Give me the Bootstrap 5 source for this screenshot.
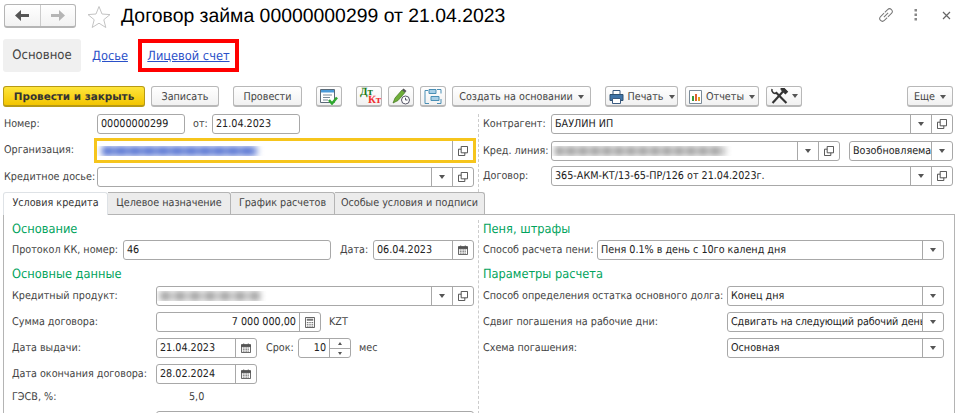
<!doctype html>
<html lang="ru"><head><meta charset="utf-8"><title>Договор займа</title>
<link href="https://cdn.jsdelivr.net/npm/bootstrap@5.3.0/dist/css/bootstrap.min.css" rel="stylesheet">
<style>
html,body{height:413px;overflow:hidden}
*{text-rendering:geometricPrecision}
body{background:#fff;color:#444;font:10.7px/1.2 "DejaVu Sans",sans-serif;font-stretch:condensed}
.hdr{height:39px;padding:4px 0 0 4px}
.navgrp{width:72px;height:24px;border:1px solid #b5b5b5;border-bottom-width:2px;border-radius:3px;background:linear-gradient(#fff,#f2f2f2)}
.navgrp>span{width:36px}
.navgrp>span+span{border-left:1px solid #ccc}
.titl{font:19.4px/1 "Liberation Sans",sans-serif;color:#000;margin-left:10px;white-space:nowrap;padding-top:3px}
.star{margin:1px 0 0 11px}
.topi{margin:3px 9px 0 auto}
.sect{height:33px;margin-left:3px;margin-bottom:14px}
.sect-a{width:78px;background:#f0f0f0;border-radius:3px;font-size:13px;color:#444}
.sect-l{color:#2a50c8;text-decoration:underline;font-size:12.7px}
.sect-box{border:4px solid #f00;width:101px;margin-left:10px}
.tb{height:21px;margin-left:3px}
.bt{height:21px;border:1px solid #b8b8b8;border-bottom-width:2px;border-radius:3px;background:linear-gradient(#fff,#f1f1f1);color:#444;padding:2px 0 0;white-space:nowrap;font-size:10.7px;font-stretch:condensed;display:flex;align-items:center;justify-content:center;flex:none}
.bt-i{padding:0}
.bt-y{background:linear-gradient(#fee53c,#f3c500);border-color:#b79a14;color:#333;font-weight:700;width:142px;font-size:10.4px;font-stretch:normal}
.w68{width:68px}.w69{width:69px}.w26{width:26px}.w139{width:139px}.w73{width:73px}.w74{width:74px}.w36{width:36px}.w46{width:46px}
.tri{display:inline-block;border:3px solid transparent;border-top:4px solid #555;border-bottom:0;margin-left:5px;flex:none}
.dtkt{font:700 11px/8.500px "Liberation Serif",serif;text-align:left;padding-left:3px;display:block;width:100%}
.dtkt b{color:#1b7a1b;display:block}.dtkt i{color:#f03030;font-style:normal;display:block;padding-left:8px}
.frmtop{margin-top:7px;height:78px}
.colL{width:474px;margin-left:4px;flex:none}
.colR{width:474px;border-left:1px dashed #ccc;padding-left:4px;flex:none}
.r{height:20px;white-space:nowrap}
.fld{height:20px;border:1px solid #a8a8a8;border-radius:3px;background:#fff;color:#222;overflow:hidden;white-space:nowrap;flex:none}
.fv{padding-left:3px;flex:1 1 auto;overflow:hidden;min-width:0}
.tight{letter-spacing:-.1px}
.fc{width:21px;flex:none;border-left:1px solid #a8a8a8;height:100%}
.tc{display:inline-block;border:3px solid transparent;border-top:4px solid #555;border-bottom:0}
.lb{flex:none}
.w88{width:88px}.l93{width:93px}
.fx{width:377px}
.org{width:382px;height:25px;margin:0 0 0 -3px;border:3px solid #f6c51c;background:#fff;flex:none}
.org .fv{padding-left:5px}
.blur{height:10px;display:block}
.bl-b{width:155px;filter:blur(3px);background:repeating-linear-gradient(90deg,#5573d2 0 10px,#7f96de 10px 14px)}
.bl-g{width:170px;filter:blur(3px);background:repeating-linear-gradient(90deg,#999 0 8px,#d4d4d4 8px 12px)}
.bl-g2{width:100px;filter:blur(3px);background:repeating-linear-gradient(90deg,#a0a0a0 0 10px,#dcdcdc 10px 15px)}
.l68{width:68px}.f402{width:402px}.f289{width:289px}.f104{width:104px}
.tabsx{border:0;margin:0 0 0 3px;height:22px;font-size:10.7px;flex-wrap:nowrap}
.tabsx .nav-link{height:22px;padding:4px 0 0;text-align:center;border:1px solid #b4b4b4;border-left-width:0;border-bottom:0;border-radius:0 3px 0 0;background:#ececec;color:#444;margin:0;white-space:nowrap}
.tabsx .nav-link.active{background:#fff;border-left-width:1px;height:23px;position:relative;z-index:1;border-radius:3px 3px 0 0;color:#333}
.pnl{margin:0 5px 0 3px;border:1px solid #b4b4b4;border-bottom:0;height:199px;padding-top:5px;overflow:hidden}
.pL{width:474px;padding-left:8px;flex:none}
.pR{border-left:1px dashed #ccc;padding-left:4px;flex:1 1 auto;height:194px}
.hd{height:18px;color:#00a35c;font-size:12.7px;line-height:18px;margin-bottom:2px}
.hd2{margin-top:5px;margin-bottom:3px}
.g6{margin-top:6px}
.l111{width:111px}.l144{width:144px}.l114{width:114px}.l244{width:244px}
.f208{width:208px}.f101{width:101px}.f318{width:318px}.f165{width:165px}.f53{width:53px}.f347{width:347px}.f217{width:217px}
.spn{width:21px;border-left:1px solid #a8a8a8;height:100%;flex:none;display:flex;flex-direction:column;align-items:center;justify-content:space-around;padding:1px 0}
.spn i{display:block;border:2px solid transparent}
.spn .up{border-bottom:3px solid #555;border-top:0}
.spn .dn{border-top:3px solid #555;border-bottom:0}
.spn hr{width:100%;margin:0;opacity:1;border-top:1px solid #a8a8a8}
.num{text-align:right;padding-right:3px}
.gs{margin-top:3px}
.fc{display:flex;align-items:center;justify-content:center}
.sprite{position:absolute}
</style></head><body>
<svg width="0" height="0" class="sprite">
<symbol id="cp" viewBox="0 0 11 11"><path d="M3.500.5h7v7h-7zM3.500 3.500h-3v7h7v-3" fill="none" stroke="#444"/></symbol>
<symbol id="cal" viewBox="0 0 11 11"><path d="M.5 2h10v8.500h-10z" fill="#fff" stroke="#555"/><path d="M.5 2h10v2h-10zM3 .5v2M8 .5v2" fill="#555" stroke="#555"/><path d="M2 5.500h7M2 7.300h7M2 9h7" stroke="#666" stroke-dasharray="1.200 .6"/></symbol>
<symbol id="clc" viewBox="0 0 11 12"><path d="M.5.5h10v11h-10z" fill="#fff" stroke="#555"/><path d="M2 2h7v2h-7z" fill="#777"/><path d="M2 6h7M2 8h7M2 10h7" stroke="#666" stroke-dasharray="1.300 .6"/></symbol>
</svg>

<div class="hdr d-flex align-items-start">
 <div class="navgrp d-flex">
  <span class="d-flex align-items-center justify-content-center"><svg width="15" height="11" viewBox="0 0 15 11"><path d="M6 0v4h8v3H6v4L0 5.500z" fill="#555"/></svg></span>
  <span class="d-flex align-items-center justify-content-center"><svg width="15" height="11" viewBox="0 0 15 11"><path d="M9 0v4H1v3h8v4l6-5.500z" fill="#b5b5b5"/></svg></span>
 </div>
 <svg class="star" width="24" height="24" viewBox="0 0 24 24"><path d="M12 1.500l3 7.500 8 .6-6.200 5.100 2 7.800L12 18.200l-6.800 4.300 2-7.800L1 9.600 9 9z" fill="#fff" stroke="#c4c4c4"/></svg>
 <div class="titl">Договор займа 00000000299 от 21.04.2023</div>
 <div class="topi d-flex align-items-center">
  <svg width="16" height="16" viewBox="0 0 16 16" fill="none" stroke="#777"><g transform="rotate(-45 8 8)"><path d="M8 5.300H3a2.700 2.700 0 0 0 0 5.400h4"/><path d="M8 10.700h5a2.700 2.700 0 0 0 0-5.400H9"/><path d="M5 8h6"/></g></svg>
  <svg style="margin-left:20px" width="4" height="12" viewBox="0 0 4 12" fill="#888"><rect x=".5" y="0" width="2.500" height="2.500"/><rect x=".5" y="4.500" width="2.500" height="2.500"/><rect x=".5" y="9" width="2.500" height="2.500"/></svg>
  <svg style="margin-left:24px" width="9" height="9" viewBox="0 0 9 9" stroke="#666" stroke-width="1.200"><path d="M1 1l7 7M8 1L1 8"/></svg>
 </div>
</div>

<div class="sect d-flex">
 <div class="sect-a d-flex align-items-center justify-content-center">Основное</div>
 <div class="sect-l d-flex align-items-center" style="margin-left:11px">Досье</div>
 <div class="sect-box sect-l d-flex align-items-center justify-content-center">Лицевой счет</div>
</div>

<div class="tb d-flex">
 <button class="bt bt-y">Провести и закрыть</button>
 <button class="bt w68" style="margin-left:6px">Записать</button>
 <button class="bt w69" style="margin-left:14px">Провести</button>
 <button class="bt bt-i w26" style="margin-left:14px"><svg width="20" height="17" viewBox="0 0 20 17"><path d="M1.500 1.500h14v13h-14z" fill="#fff" stroke="#5a6a78"/><path d="M2 2h13v2.500H2z" fill="#4a9ad8"/><path d="M4 7h9M4 9.500h7M4 12h5" stroke="#7a8a98"/><path d="M10 12l3 3.500 5-6" fill="none" stroke="#2ea82e" stroke-width="2.500"/></svg></button>
 <button class="bt bt-i w26" style="margin-left:14px"><span class="dtkt"><b>Дт</b><i>Кт</i></span></button>
 <button class="bt bt-i w26" style="margin-left:6px"><svg width="20" height="17" viewBox="0 0 20 17"><path d="M2 15l2-5 7-8 3 2.500-7 8z" fill="#6fae3a" stroke="#40751c" stroke-width=".7"/><path d="M11 2l1.500-1.500 3 2.500L14 4.500z" fill="#555"/><circle cx="14.500" cy="12" r="4" fill="#fff" stroke="#556"/><path d="M14.500 9.800V12h2" stroke="#556" fill="none"/></svg></button>
 <button class="bt bt-i w26" style="margin-left:6px"><svg width="20" height="17" viewBox="0 0 20 17" fill="none" stroke="#4a8fb5"><path d="M6 1.500h7v4H6z" fill="#a8cfe6"/><path d="M8 8.500h8v4H8z" fill="#a8cfe6"/><path d="M5 2.500H2v13h4M14 1.500h4v4M18 11v4.500h-4"/></svg></button>
 <button class="bt w139" style="margin-left:6px">Создать на основании<span class="tri"></span></button>
 <button class="bt w73" style="margin-left:14px"><svg class="me-1" width="15" height="14" viewBox="0 0 15 14"><path d="M4 .5h7v4H4z" fill="#fff" stroke="#3a5a80"/><path d="M1 4.500h13v6H1z" fill="#3f74a8" stroke="#2e5070"/><path d="M3.500 8.500h8v5h-8z" fill="#fff" stroke="#3a5a80"/></svg>Печать<span class="tri"></span></button>
 <button class="bt w74" style="margin-left:7px"><svg class="me-1" width="13" height="14" viewBox="0 0 13 14"><path d="M.5.500h12v13H.5z" fill="#fff" stroke="#7a8a98"/><path d="M3 6h2v5H3z" fill="#3a9a3a"/><path d="M6 4h2v7H6z" fill="#e06030"/><path d="M9 7h2v4H9z" fill="#e0a020"/></svg>Отчеты<span class="tri"></span></button>
 <button class="bt bt-i w36" style="margin-left:7px"><svg width="19" height="16" viewBox="0 0 17 15" fill="none" stroke="#333" stroke-width="2"><path d="M2 14L12 3"/><path d="M10 .5l3 0 3 3-2 2-4-4z" fill="#333" stroke-width="1"/><path d="M15 14L5 4"/><path d="M6 4.500A3 3 0 0 1 1.500 1"  stroke-width="1.500"/></svg><span class="tri" style="margin-left:3px"></span></button>
 <button class="bt w46 ms-auto" style="margin-right:7px">Еще<span class="tri"></span></button>
</div>

<div class="frmtop d-flex">
 <div class="colL">
  <div class="r d-flex align-items-center"><span class="lb l93">Номер:</span><div class="fld w88 d-flex align-items-center"><span class="fv">00000000299</span></div><span class="lb" style="margin-left:8px;width:19px">от:</span><div class="fld w88 d-flex align-items-center"><span class="fv">21.04.2023</span></div></div>
  <div class="d-flex align-items-center" style="height:33px">
   <span class="lb l93">Организация:</span>
   <div class="org d-flex align-items-center"><span class="fv"><span class="blur bl-b"></span></span><span class="fc"><svg width="10" height="10"><use href="#cp"/></svg></span></div>
  </div>
  <div class="r d-flex align-items-center"><span class="lb l93">Кредитное досье:</span><div class="fld fx d-flex align-items-center"><span class="fv"></span><span class="fc"><i class="tc"></i></span><span class="fc"><svg width="10" height="10"><use href="#cp"/></svg></span></div></div>
 </div>
 <div class="colR">
  <div class="r d-flex align-items-center"><span class="lb l68">Контрагент:</span><div class="fld f402 d-flex align-items-center"><span class="fv">БАУЛИН ИП</span><span class="fc"><i class="tc"></i></span><span class="fc"><svg width="10" height="10"><use href="#cp"/></svg></span></div></div>
  <div class="r d-flex align-items-center" style="margin-top:7px"><span class="lb l68">Кред. линия:</span><div class="fld f289 d-flex align-items-center"><span class="fv"><span class="blur bl-g"></span></span><span class="fc"><i class="tc"></i></span><span class="fc"><svg width="10" height="10"><use href="#cp"/></svg></span></div><div class="fld f104 d-flex align-items-center" style="margin-left:9px"><span class="fv">Возобновляема</span><span class="fc"><i class="tc"></i></span></div></div>
  <div class="r d-flex align-items-center" style="margin-top:5px"><span class="lb l68">Договор:</span><div class="fld f402 d-flex align-items-center"><span class="fv">365-АКМ-КТ/13-65-ПР/126 от 21.04.2023г.</span><span class="fc"><i class="tc"></i></span><span class="fc"><svg width="10" height="10"><use href="#cp"/></svg></span></div></div>
 </div>
</div>

<ul class="nav nav-tabs tabsx">
 <li class="nav-item" style="width:105px"><a class="nav-link active" href="#">Условия кредита</a></li>
 <li class="nav-item" style="width:123px"><a class="nav-link" href="#">Целевое назначение</a></li>
 <li class="nav-item" style="width:104px"><a class="nav-link" href="#">График расчетов</a></li>
 <li class="nav-item" style="width:150px"><a class="nav-link" href="#">Особые условия и подписи</a></li>
</ul>
<div class="pnl d-flex">
 <div class="pL">
  <div class="hd">Основание</div>
  <div class="r d-flex align-items-center"><span class="lb l111">Протокол КК, номер:</span><div class="fld f208 d-flex align-items-center"><span class="fv">46</span></div><span class="lb" style="margin-left:9px;width:33px">Дата:</span><div class="fld f101 d-flex align-items-center"><span class="fv">06.04.2023</span><span class="fc"><svg width="10" height="10"><use href="#cal"/></svg></span></div></div>
  <div class="hd hd2">Основные данные</div>
  <div class="r d-flex align-items-center"><span class="lb l144">Кредитный продукт:</span><div class="fld f318 d-flex align-items-center"><span class="fv"><span class="blur bl-g2"></span></span><span class="fc"><i class="tc"></i></span><span class="fc"><svg width="10" height="10"><use href="#cp"/></svg></span></div></div>
  <div class="r g6 d-flex align-items-center"><span class="lb l144">Сумма договора:</span><div class="fld f165 d-flex align-items-center"><span class="fv num">7 000 000,00</span><span class="fc"><svg width="10" height="11"><use href="#clc"/></svg></span></div><span class="ms-2">KZT</span></div>
  <div class="r g6 d-flex align-items-center"><span class="lb l144">Дата выдачи:</span><div class="fld f101 d-flex align-items-center"><span class="fv">21.04.2023</span><span class="fc"><svg width="10" height="10"><use href="#cal"/></svg></span></div><span class="lb" style="margin-left:9px;width:32px">Срок:</span><div class="fld f53 d-flex align-items-center"><span class="fv num">10</span><span class="spn"><i class="up"></i><hr><i class="dn"></i></span></div><span class="ms-2">мес</span></div>
  <div class="r g6 d-flex align-items-center"><span class="lb l144">Дата окончания договора:</span><div class="fld f101 d-flex align-items-center"><span class="fv">28.02.2024</span><span class="fc"><svg width="10" height="10"><use href="#cal"/></svg></span></div></div>
  <div class="r gs d-flex align-items-center"><span class="lb l144">ГЭСВ, %:</span><span style="margin-left:33px">5,0</span></div>
  <div class="fld f318" style="margin:4px 0 0 144px"></div>
 </div>
 <div class="pR">
  <div class="hd">Пеня, штрафы</div>
  <div class="r d-flex align-items-center"><span class="lb l114">Способ расчета пени:</span><div class="fld f347 d-flex align-items-center"><span class="fv">Пеня 0.1% в день с 10го календ дня</span><span class="fc"><i class="tc"></i></span></div></div>
  <div class="hd hd2">Параметры расчета</div>
  <div class="r d-flex align-items-center"><span class="lb l244">Способ определения остатка основного долга:</span><div class="fld f217 d-flex align-items-center"><span class="fv">Конец дня</span><span class="fc"><i class="tc"></i></span></div></div>
  <div class="r g6 d-flex align-items-center"><span class="lb l244">Сдвиг погашения на рабочие дни:</span><div class="fld f217 d-flex align-items-center"><span class="fv tight">Сдвигать на следующий рабочий день</span><span class="fc"><i class="tc"></i></span></div></div>
  <div class="r g6 d-flex align-items-center"><span class="lb l244">Схема погашения:</span><div class="fld f217 d-flex align-items-center"><span class="fv">Основная</span><span class="fc"><i class="tc"></i></span></div></div>
 </div>
</div>
</body></html>
